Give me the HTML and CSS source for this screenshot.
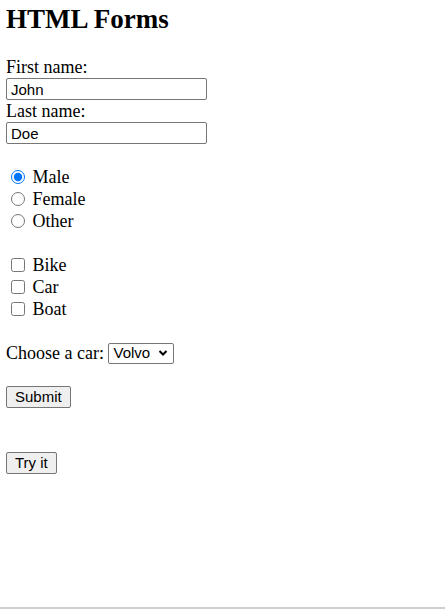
FILE: index.html
```html
<!DOCTYPE html>
<html>
<head>
<meta charset="utf-8">
<link rel="stylesheet" href="styles.css">
</head>
<body>
<div class="page">
<h1 class="title">HTML Forms</h1>
<form class="form">
  <label class="lbl" for="fname">First name:</label><br>
  <input class="txt" type="text" id="fname" value="John"><br>
  <label class="lbl" for="lname">Last name:</label><br>
  <input class="txt" type="text" id="lname" value="Doe"><br><br>
  <input class="radio" type="radio" id="male" name="g" checked> <label for="male">Male</label><br>
  <input class="radio" type="radio" id="female" name="g"> <label for="female">Female</label><br>
  <input class="radio" type="radio" id="other" name="g"> <label for="other">Other</label><br><br>
  <input class="check" type="checkbox" id="v1"> <label for="v1">Bike</label><br>
  <input class="check" type="checkbox" id="v2"> <label for="v2">Car</label><br>
  <input class="check" type="checkbox" id="v3"> <label for="v3">Boat</label><br><br>
  <label for="cars">Choose a car:</label>
  <select class="sel" id="cars"><option>Volvo</option><option>Saab</option><option>Fiat</option><option>Audi</option></select><br><br>
  <input class="btn" type="submit" value="Submit">
</form>
<p class="para"><button class="btn" type="button">Try it</button></p>
</div>
</body>
</html>
```
FILE: styles.css
```css
html, body { margin: 0; padding: 0; }
body { font-family: "Liberation Serif", "Times New Roman", serif; font-size: 18px; line-height: 22px; color: #000; background: #fff; }
.page { box-sizing: border-box; min-height: 100vh; padding: 0 6px; border-bottom: 2px solid #cfcfcf; }
.title { font-size: 27px; font-weight: bold; margin: 0; padding: 0; line-height: 38px; }
.form { margin-top: 18px; }
.txt { font-family: "Liberation Sans", Arial, sans-serif; font-size: 15px; line-height: 18px; width: 201px; height: 22px; box-sizing: border-box; padding: 1px 4px; border: 1px solid #767676; border-radius: 2px; margin: 0; vertical-align: top; background: #fff; }
.radio, .check { width: 14px; height: 14px; margin: 3px 3px 0 5px; vertical-align: -1px; }
.sel { appearance: none; -webkit-appearance: none; font-family: "Liberation Sans", Arial, sans-serif; font-size: 15px; line-height: 18px; height: 21px; padding: 0 20px 0 4px; width: 66px; border: 1px solid #767676; border-radius: 2px; background: #fff url("data:image/svg+xml;utf8,<svg xmlns='http://www.w3.org/2000/svg' width='10' height='8' viewBox='0 0 10 8'><path d='M1.5 2 L5 5.5 L8.5 2' fill='none' stroke='black' stroke-width='2'/></svg>") no-repeat right 5px center; color: #000; vertical-align: 1px; margin: 0; }
.btn { font-family: "Liberation Sans", Arial, sans-serif; font-size: 15px; line-height: 18px; height: 22px; padding: 0 8px; border: 1px solid #767676; border-radius: 2px; background: #efefef; color: #000; margin: 0; box-sizing: border-box; vertical-align: top; }
.para { margin: 44px 0 0; }
```
